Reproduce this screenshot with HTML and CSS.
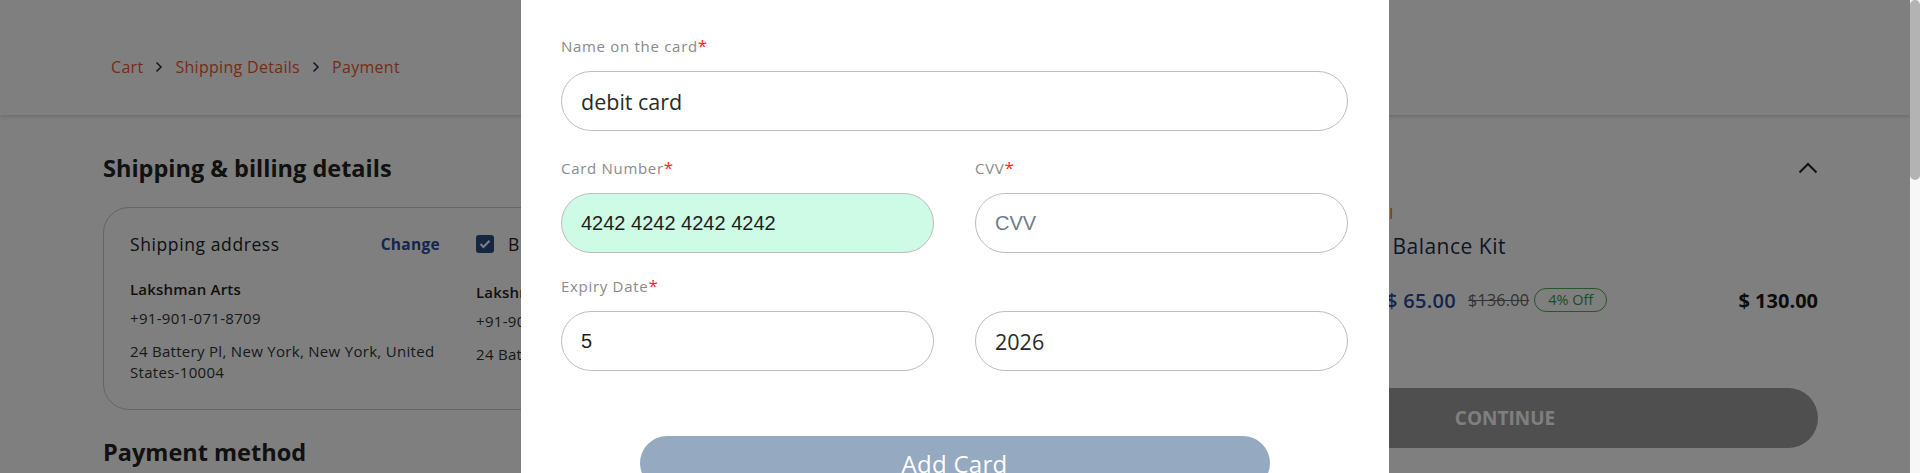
FILE: index.html
```html
<!DOCTYPE html>
<html lang="en">
<head>
<meta charset="utf-8">
<title>Checkout – Payment</title>
<link rel="stylesheet" href="styles.css">
</head>
<body>
<div class="page">
  <header class="topbar">
    <nav class="crumbs">
      <a class="crumb">Cart</a>
      <svg class="sep" width="8" height="12" viewBox="0 0 8 12"><path d="M1.5 1.5 L6 6 L1.5 10.5" fill="none" stroke="#2d2f4a" stroke-width="1.6"/></svg>
      <a class="crumb">Shipping Details</a>
      <svg class="sep" width="8" height="12" viewBox="0 0 8 12"><path d="M1.5 1.5 L6 6 L1.5 10.5" fill="none" stroke="#2d2f4a" stroke-width="1.6"/></svg>
      <a class="crumb">Payment</a>
    </nav>
  </header>

  <main class="checkout">
    <section class="details">
      <h2 class="section-title">Shipping &amp; billing details</h2>
      <div class="addr-box">
        <div class="addr-col">
          <div class="addr-head">
            <span class="addr-title">Shipping address</span>
            <a class="change">Change</a>
          </div>
          <p class="addr-name">Lakshman Arts</p>
          <p class="addr-line">+91-901-071-8709</p>
          <p class="addr-line addr-street">24 Battery Pl, New York, New York, United States-10004</p>
        </div>
        <div class="addr-col addr-col-billing">
          <div class="addr-head addr-head-left">
            <span class="checkbox"><svg width="12" height="10" viewBox="0 0 12 10"><path d="M1.5 5 L4.5 8 L10.5 1.8" fill="none" stroke="#fff" stroke-width="2"/></svg></span>
            <span class="addr-title">Billing address</span>
          </div>
          <p class="addr-name">Lakshman Arts</p>
          <p class="addr-line">+91-901-071-8709</p>
          <p class="addr-line addr-street-wide">24 Battery Pl, New York, New York, United States-10004</p>
        </div>
      </div>
      <h2 class="section-title section-title-payment">Payment method</h2>
    </section>

    <aside class="summary">
      <div class="sum-head">
        <span>Order Summary</span>
        <svg width="20" height="12" viewBox="0 0 20 12"><path d="M1.5 10.5 L10 2 L18.5 10.5" fill="none" stroke="#222" stroke-width="2"/></svg>
      </div>
      <div class="product">
        <div class="thumb"></div>
        <div class="info">
          <span class="tag">Special</span>
          <span class="pname">Yoga Balance Kit</span>
          <div class="price-row">
            <span class="qty">2 ×</span>
            <span class="price">$ 65.00</span>
            <s class="mrp">$136.00</s>
            <span class="off">4% Off</span>
            <span class="total">$ 130.00</span>
          </div>
        </div>
      </div>
      <button class="continue" type="button">CONTINUE</button>
    </aside>
  </main>
</div>

<div class="backdrop"></div>

<div class="modal">
  <form class="card-form">
    <div class="field field-name">
      <label class="label">Name on the card<span class="req">*</span></label>
      <input class="input" type="text" value="debit card" readonly>
    </div>
    <div class="grid2">
      <div class="field field-card">
        <label class="label">Card Number<span class="req">*</span></label>
        <input class="input stripe autofilled" type="text" value="4242 4242 4242 4242" readonly>
      </div>
      <div class="field field-card">
        <label class="label">CVV<span class="req">*</span></label>
        <input class="input stripe" type="text" placeholder="CVV" readonly>
      </div>
    </div>
    <div class="field">
      <label class="label">Expiry Date<span class="req">*</span></label>
      <div class="grid2">
        <input class="input stripe" type="text" value="5" readonly>
        <input class="input" type="text" value="2026" readonly>
      </div>
    </div>
    <button class="submit" type="button">Add Card</button>
  </form>
</div>

<div class="scrollbar"><div class="scroll-thumb"></div></div>
</body>
</html>
```

FILE: styles.css
```css
* { box-sizing: border-box; }

html, body {
  margin: 0;
  height: 100%;
  overflow: hidden;
}

body {
  font-family: "Open Sans", "Liberation Sans", sans-serif;
  color: #222;
  background: #fff;
}

.page {
  margin-right: 10px;
}

/* ---------- header / breadcrumb ---------- */
.topbar {
  height: 115px;
  background: #fff;
  box-shadow: 0 2px 4px rgba(0, 0, 0, 0.14);
  padding: 56px 0 0 111px;
  position: relative;
}

.crumbs {
  display: flex;
  align-items: center;
  gap: 12px;
  font-size: 16px;
  font-weight: 500;
  line-height: 22px;
  letter-spacing: 0.3px;
}

.crumb {
  color: #ec5a2a;
}

/* ---------- main checkout ---------- */
.checkout {
  display: flex;
  gap: 60px;
  padding: 0 92px 0 103px;
}

.details {
  flex: 1;
}

.section-title {
  margin: 38px 0 24px;
  font-size: 23.5px;
  font-weight: 700;
  line-height: 30px;
  color: #222;
}

.section-title-payment {
  margin-top: 27px;
}

.addr-box {
  display: flex;
  gap: 36px;
  border: 1px solid #c9c9c9;
  border-radius: 26px;
  padding: 23px 26px 26px;
}

.addr-col {
  width: 310px;
  flex: none;
}

.addr-col-billing {
  flex: 1;
}

.addr-head {
  display: flex;
  align-items: center;
  justify-content: space-between;
  height: 26px;
}

.addr-head-left {
  justify-content: flex-start;
  gap: 14px;
}

.addr-title {
  font-size: 17.5px;
  font-weight: 500;
  letter-spacing: 0.6px;
  white-space: nowrap;
}

.change {
  font-size: 15.5px;
  font-weight: 700;
  letter-spacing: 0.3px;
  color: #2a4a9c;
}

.checkbox {
  width: 18px;
  height: 18px;
  border-radius: 3px;
  background: #2b4c80;
  display: flex;
  align-items: center;
  justify-content: center;
  flex: none;
}

.addr-name {
  margin: 21px 0 0;
  font-size: 15px;
  font-weight: 600;
  line-height: 22px;
  letter-spacing: 0.2px;
}

.addr-line {
  margin: 7px 0 0;
  font-size: 15px;
  line-height: 22px;
  letter-spacing: 0.3px;
  color: #333;
}

.addr-street {
  margin-top: 12px;
  line-height: 21px;
  width: 305px;
}

.addr-street-wide {
  margin-top: 12px;
  line-height: 21px;
  white-space: nowrap;
}

.addr-col-billing .addr-name {
  margin-top: 24px;
}

/* ---------- order summary ---------- */
.summary {
  width: 626px;
  flex: none;
}

.sum-head {
  margin-top: 38px;
  height: 30px;
  display: flex;
  justify-content: space-between;
  align-items: center;
  font-size: 20px;
  font-weight: 700;
}

.product {
  display: flex;
  gap: 25px;
  margin-top: 20px;
}

.thumb {
  width: 120px;
  height: 100px;
  border-radius: 8px;
  background: #eee;
  flex: none;
}

.info {
  flex: 1;
  display: flex;
  flex-direction: column;
}

.tag {
  font-size: 15px;
  line-height: 20px;
  font-weight: 500;
  letter-spacing: 1.2px;
  color: #ec5a2a;
}

.pname {
  margin-top: 9px;
  font-size: 21px;
  line-height: 28px;
  font-weight: 500;
  letter-spacing: 0.5px;
  color: #1d2b4f;
}

.price-row {
  margin-top: 28px;
  height: 24px;
  display: flex;
  align-items: center;
}

.qty {
  font-size: 15px;
  margin-right: 28px;
  color: #333;
}

.price {
  font-size: 20px;
  font-weight: 600;
  letter-spacing: 0.3px;
  color: #2a4a9c;
}

.mrp {
  margin-left: 12px;
  font-size: 16px;
  letter-spacing: 0.3px;
  color: #666;
}

.off {
  margin-left: 5px;
  height: 24px;
  border: 1px solid #4caf50;
  border-radius: 12px;
  padding: 0 13px;
  font-size: 14.5px;
  line-height: 22px;
  color: #3d9a43;
}

.total {
  margin-left: auto;
  font-size: 20px;
  font-weight: 700;
  color: #1a1a1a;
}

.continue {
  display: block;
  width: 100%;
  height: 60px;
  margin-top: 76px;
  border: 0;
  border-radius: 30px;
  background: #9e9e9e;
  color: #fff;
  font-family: "Open Sans", "Liberation Sans", sans-serif;
  font-size: 19px;
  font-weight: 700;
}

/* ---------- backdrop + modal ---------- */
.backdrop {
  position: fixed;
  top: 0;
  left: 0;
  bottom: 0;
  right: 10px;
  background: rgba(0, 0, 0, 0.5);
}

.modal {
  position: fixed;
  top: 0;
  left: calc((100% - 10px - 868px) / 2);
  width: 868px;
  height: 100%;
  background: #fff;
  padding: 36px 41px 0 40px;
}

.field {
  margin-bottom: 25px;
}

.field-name {
  margin-bottom: 27px;
}

.field-card {
  margin-bottom: 23px;
}

.label {
  display: block;
  height: 21px;
  margin-bottom: 14px;
  font-size: 15px;
  line-height: 21px;
  letter-spacing: 0.7px;
  color: #8a8a8a;
}

.req {
  color: #ff1f1f;
  font-size: 17px;
  line-height: 1;
  letter-spacing: 0;
}

.grid2 {
  display: grid;
  grid-template-columns: 1fr 1fr;
  column-gap: 41px;
}

.input {
  display: block;
  width: 100%;
  height: 60px;
  margin: 0;
  border: 1px solid #bdbdbd;
  border-radius: 30px;
  padding: 0 19px;
  background: #fff;
  outline: none;
  font-family: "Open Sans", "Liberation Sans", sans-serif;
  font-size: 21.5px;
  color: #2a2a2a;
}

.input.stripe {
  font-family: "Liberation Sans", Arial, sans-serif;
  font-size: 20px;
  color: #1f1f1f;
}

.input.autofilled {
  background: #cdfbe5;
}

.input::placeholder {
  color: #6f7b8a;
}

.submit {
  display: block;
  width: 630px;
  height: 54px;
  margin: 65px auto 0;
  border: 0;
  border-radius: 30px;
  background: #95a9c1;
  color: #fff;
  font-family: "Open Sans", "Liberation Sans", sans-serif;
  font-size: 24px;
  font-weight: 500;
  letter-spacing: 0.3px;
}

/* ---------- fake scrollbar ---------- */
.scrollbar {
  position: fixed;
  top: 0;
  right: 0;
  bottom: 0;
  width: 10px;
  background: #f7f7f7;
}

.scroll-thumb {
  height: 180px;
  border-radius: 5px;
  background: #b3b3b3;
}
```
